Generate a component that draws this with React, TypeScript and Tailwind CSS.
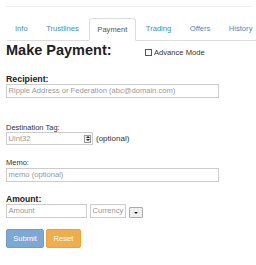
const tabs = ['Info', 'Trustlines', 'Payment', 'Trading', 'Offers', 'History'];

function Tabs() {
  return (
    <div className="flex w-max border-b border-[#ddd] h-[23px] mt-[11px] ml-[6.5px] whitespace-nowrap text-[7.6px]">
      {tabs.map((t) => {
        const active = t === 'Payment';
        return (
          <div
            key={t}
            className={
              active
                ? 'flex items-center px-[7.5px] h-[23px] mr-[1.5px] text-[#555] bg-white border border-[#ddd] border-b-white rounded-t-[3px]'
                : 'flex items-center px-[7.5px] h-[22px] mr-[1.5px] text-[#428bca] border border-transparent'
            }
          >
            {t}
          </div>
        );
      })}
    </div>
  );
}

function Field({ placeholder, className }: { placeholder: string; className: string }) {
  return (
    <div
      className={
        'border border-[#ccc] pl-[1.5px] flex items-center overflow-hidden whitespace-nowrap text-[#999] text-[7.6px] bg-white ' +
        className
      }
    >
      {placeholder}
    </div>
  );
}

function Spinner() {
  return (
    <span className="w-[7px] h-[8px] border border-[#999] bg-[#eee] flex flex-col items-center justify-center gap-[1px]">
      <svg width="4" height="2" viewBox="0 0 4 2">
        <path d="M0 2 L2 0 L4 2 Z" fill="#222" />
      </svg>
      <svg width="4" height="2" viewBox="0 0 4 2">
        <path d="M0 0 L4 0 L2 2 Z" fill="#222" />
      </svg>
    </span>
  );
}

export default function App() {
  return (
    <div className="w-[256px] h-[265px] overflow-hidden bg-white text-[7.5px] font-['Liberation_Sans',Arial,sans-serif] text-[#333]">
      <div className="pt-[6px]">
        <div className="border-t border-[#eee] w-[247px] ml-[6px]" />
      </div>
      <Tabs />
      <div className="px-[6px]">
        <div className="flex items-start h-[19px]">
          <h1 className="w-[138.5px] shrink-0 text-[14.5px] font-bold leading-[19px] text-[#222]">Make Payment:</h1>
          <label className="mt-[2px] h-[19px] flex items-center gap-[2.5px] text-[7.6px] whitespace-nowrap">
            <span className="w-[7px] h-[7px] border border-[#555] bg-white inline-block" />
            Advance Mode
          </label>
        </div>

        <div className="mt-[15px] font-bold text-[8.8px] text-[#222] leading-[9px]">Recipient:</div>
        <Field placeholder="Ripple Address or Federation (abc@domain.com)" className="w-[213px] h-[14px]" />

        <div className="mt-[25px] leading-[9px]">Destination Tag:</div>
        <div className="flex items-center">
          <div className="border border-[#ccc] h-[13px] w-[87px] flex items-center justify-between pl-[1.5px] pr-[1px] text-[#999] text-[7.6px]">
            Uint32
            <Spinner />
          </div>
          <span className="ml-[3px] text-[8px]">(optional)</span>
        </div>

        <div className="mt-[13px] leading-[10px]">Memo:</div>
        <Field placeholder="memo (optional)" className="w-[213px] h-[14px]" />

        <div className="mt-[12px] font-bold text-[8.6px] text-[#222] leading-[10px]">Amount:</div>
        <div className="flex items-end">
          <Field placeholder="Amount" className="w-[81px] h-[14px]" />
          <Field placeholder="Currency" className="w-[36px] h-[14px] ml-[3px]" />
          <div className="ml-[3px] w-[14px] h-[11px] border border-[#aaa] bg-[#eee] rounded-[1px] flex items-center justify-center">
            <svg width="4" height="2" viewBox="0 0 4 2">
              <path d="M0 0 L4 0 L2 2 Z" fill="#222" />
            </svg>
          </div>
        </div>

        <div className="flex mt-[11px] gap-[2px]">
          <button className="h-[19px] w-[38px] rounded-[2px] bg-[#7ba8d5] border border-[#6f9dcb] text-white text-[7.6px]">
            Submit
          </button>
          <button className="h-[19px] w-[35px] rounded-[2px] bg-[#f0ad4e] border border-[#eea236] text-white text-[7.6px]">
            Reset
          </button>
        </div>
      </div>
    </div>
  );
}
